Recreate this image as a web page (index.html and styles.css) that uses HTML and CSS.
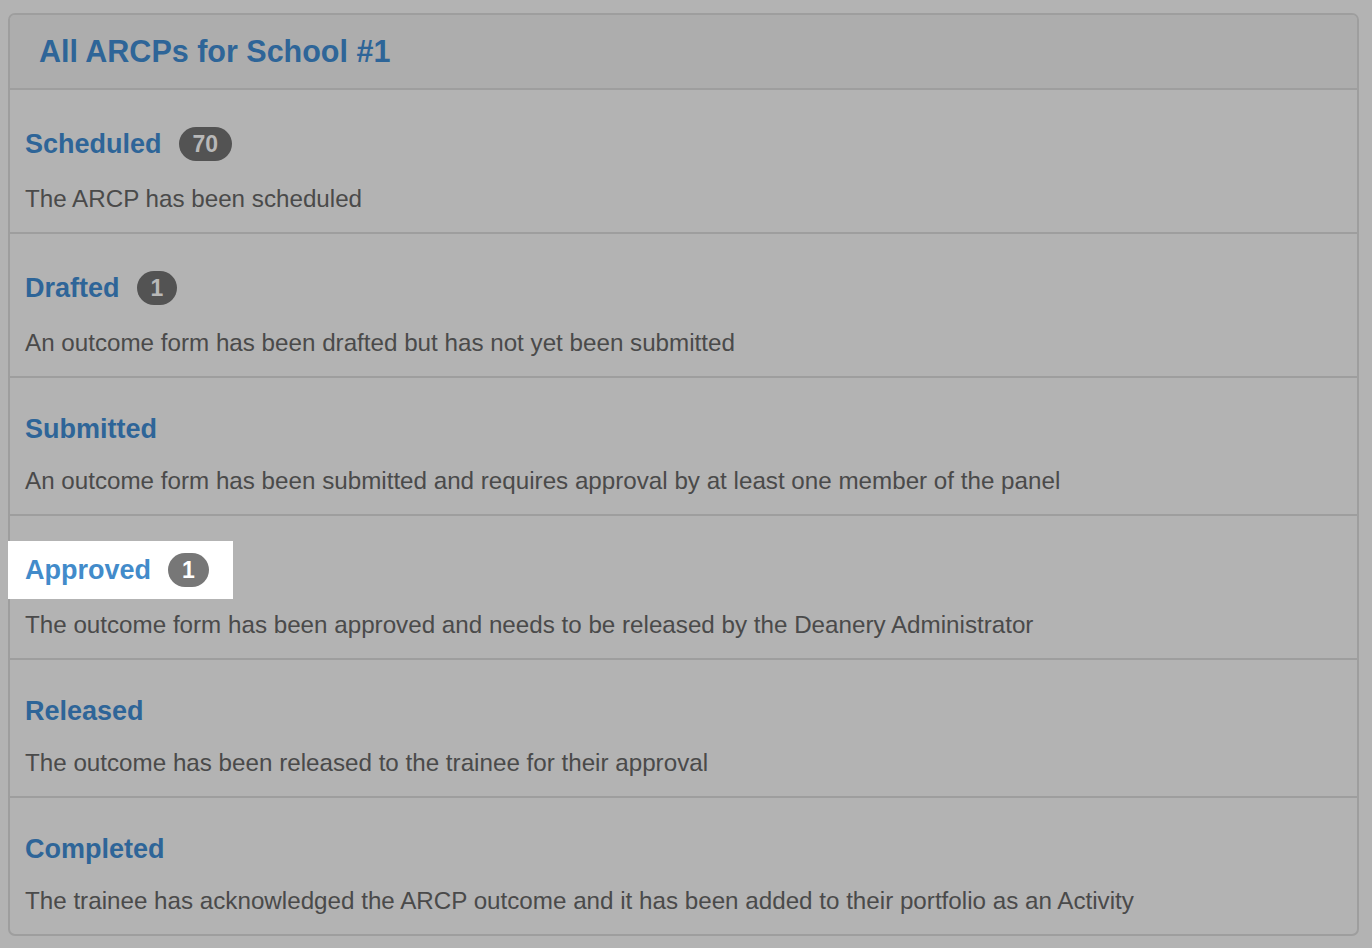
FILE: index.html
```html
<!DOCTYPE html>
<html>
<head>
<meta charset="utf-8">
<link rel="stylesheet" href="styles.css">
</head>
<body>
<div class="panel">
  <div class="panel-heading"><h3 class="panel-title">All ARCPs for School #1</h3></div>
  <div class="item">
    <div class="item-head"><a class="item-link">Scheduled</a><span class="badge">70</span></div>
    <p class="desc">The ARCP has been scheduled</p>
  </div>
  <div class="item">
    <div class="item-head"><a class="item-link">Drafted</a><span class="badge">1</span></div>
    <p class="desc">An outcome form has been drafted but has not yet been submitted</p>
  </div>
  <div class="item">
    <div class="item-head"><a class="item-link">Submitted</a></div>
    <p class="desc">An outcome form has been submitted and requires approval by at least one member of the panel</p>
  </div>
  <div class="item">
    <div class="item-head highlight"><a class="item-link">Approved</a><span class="badge">1</span></div>
    <p class="desc">The outcome form has been approved and needs to be released by the Deanery Administrator</p>
  </div>
  <div class="item">
    <div class="item-head"><a class="item-link">Released</a></div>
    <p class="desc">The outcome has been released to the trainee for their approval</p>
  </div>
  <div class="item">
    <div class="item-head"><a class="item-link">Completed</a></div>
    <p class="desc">The trainee has acknowledged the ARCP outcome and it has been added to their portfolio as an Activity</p>
  </div>
</div>
</body>
</html>
```
FILE: styles.css
```css
html, body {
  margin: 0;
  padding: 0;
  background: #b3b3b3;
  font-family: "Liberation Sans", Arial, sans-serif;
}
body {
  padding: 13px 13px 0 8px;
}
.panel {
  border: 2px solid #9e9e9e;
  border-radius: 7px;
  background: #b3b3b3;
}
.panel-heading {
  background: #adadad;
  border-bottom: 2px solid #9e9e9e;
  border-radius: 5px 5px 0 0;
  height: 73px;
  display: flex;
  align-items: center;
  padding-left: 29px;
}
.panel-title {
  margin: 0;
  font-size: 30.5px;
  font-weight: bold;
  color: #2e6598;
  line-height: 1;
}
.item {
  border-bottom: 2px solid #9e9e9e;
  padding: 25px 0 18px 0;
}
.item:last-child {
  border-bottom: none;
}
.item-head {
  display: inline-flex;
  align-items: center;
  padding: 12px 25px 12px 15px;
  gap: 17px;
}
.item-link {
  font-size: 27px;
  font-weight: bold;
  color: #2e6598;
  line-height: 28px;
}
.badge {
  display: inline-flex;
  align-items: center;
  justify-content: center;
  height: 34px;
  min-width: 40px;
  box-sizing: border-box;
  padding: 0 14px;
  border-radius: 17px;
  background: #535353;
  color: #b8b8b8;
  font-size: 23px;
  font-weight: bold;
}
.highlight {
  background: #ffffff;
  margin-left: -2px;
  padding-left: 17px;
  padding-right: 24px;
}
.highlight .item-link {
  color: #428bca;
}
.highlight .badge {
  background: #777777;
  color: #ffffff;
}
.desc {
  margin: 11px 0 0 15px;
  font-size: 24.2px;
  line-height: 30px;
  color: #4a4a4a;
}
```
